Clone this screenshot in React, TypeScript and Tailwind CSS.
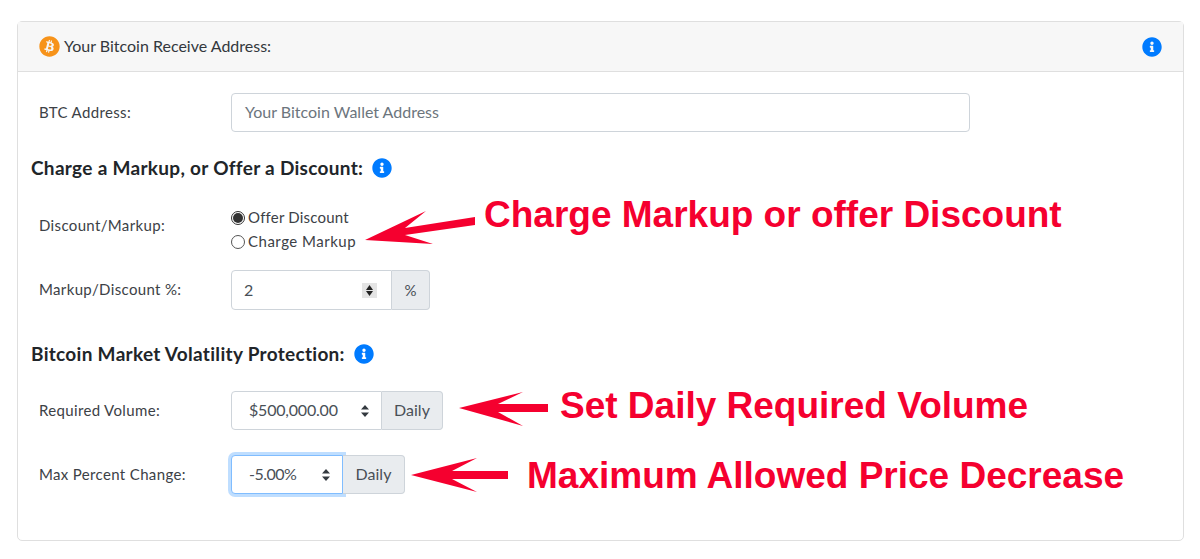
import React from "react";
import { FaBitcoin, FaInfoCircle } from "react-icons/fa";

function Updown() {
  return (
    <svg width="8" height="12" viewBox="0 0 8 12" className="shrink-0">
      <path d="M4 0 L8 4.6 H0 Z M0 7.4 H8 L4 12 Z" fill="#343a40" />
    </svg>
  );
}

function Spinner() {
  return (
    <div className="flex h-[15px] w-[15px] flex-col items-center justify-center gap-[1px] bg-[#e4e4e4]">
      <svg width="9" height="5" viewBox="0 0 9 5"><path d="M4.5 0 L8 5 H1 Z" fill="#222" /></svg>
      <svg width="9" height="5" viewBox="0 0 9 5"><path d="M1 0 H8 L4.5 5 Z" fill="#222" /></svg>
    </div>
  );
}

function Arrow({ x, y, w, h, points }: { x: number; y: number; w: number; h: number; points: string }) {
  return (
    <svg width={w} height={h} viewBox={`0 0 ${w} ${h}`} className="absolute" style={{ left: x, top: y }}>
      <polygon points={points} fill="#f5002f" />
    </svg>
  );
}

function Note({ x, y, children }: { x: number; y: number; children: React.ReactNode }) {
  return (
    <div
      className="absolute whitespace-nowrap font-['Liberation_Sans',sans-serif] text-[37px] leading-[44px] font-bold text-[#f5002f]"
      style={{ left: x, top: y }}
    >
      {children}
    </div>
  );
}

function Label({ children, top }: { children: React.ReactNode; top?: boolean }) {
  return (
    <div className={top ? "w-[200px] shrink-0 pt-[8px] pl-[8px] text-[15px] tracking-[0.35px] text-[#3c4146]" : "w-[200px] shrink-0 pb-[1px] pl-[8px] text-[15px] tracking-[0.35px] text-[#3c4146]"}>
      {children}
    </div>
  );
}

export default function App() {
  return (
    <div className="relative h-[559px] w-[1200px] overflow-hidden bg-white pt-[21px] pl-[17px] font-['Lato',sans-serif]">
      <div className="h-[520px] w-[1167px] rounded-[5px] border border-[#dfdfdf] bg-white">
        <div className="flex h-[50px] items-center justify-between border-b border-[#dfdfdf] bg-[#f7f7f7] pr-[21px] pl-[21px]">
          <div className="flex items-center gap-[4px] text-[16px] text-[#33383d]">
            <FaBitcoin className="h-[21px] w-[21px] text-[#f7931a]" />
            <span className="pb-[2px]">Your Bitcoin Receive Address:</span>
          </div>
          <FaInfoCircle className="h-[20px] w-[20px] text-[#007bff]" />
        </div>

        <div className="px-[13px] pt-[21px]">
          <div className="flex items-center">
            <Label>BTC Address:</Label>
            <div className="flex h-[39px] w-[739px] items-center rounded-[4px] border border-[#ced4da] bg-white pb-[2px] pl-[13px] text-[16px] text-[#6c757d]">
              Your Bitcoin Wallet Address
            </div>
          </div>

          <div className="mt-[24px] flex items-center gap-[9px] text-[19px] leading-[24px] font-bold tracking-[0.3px] text-[#212529]">
            <span>Charge a Markup, or Offer a Discount:</span>
            <FaInfoCircle className="h-[20px] w-[20px] text-[#007bff]" />
          </div>

          <div className="mt-[26px] flex items-start">
            <Label top>Discount/Markup:</Label>
            <div className="flex flex-col gap-[1px] text-[15px] leading-[23px] tracking-[0.2px] text-[#3c4146]">
              <div className="flex items-center gap-[3px]">
                <span className="flex h-[14px] w-[14px] items-center justify-center rounded-full border border-[#333] bg-white">
                  <span className="h-[10px] w-[10px] rounded-full bg-[#333]" />
                </span>
                Offer Discount
              </div>
              <div className="flex items-center gap-[3px]">
                <span className="h-[14px] w-[14px] rounded-full border border-[#555] bg-white" />
                <span className="tracking-[0.5px]">Charge Markup</span>
              </div>
            </div>
          </div>

          <div className="mt-[17px] flex items-center">
            <Label>Markup/Discount %:</Label>
            <div className="flex h-[40px] text-[16px] text-[#495057]">
              <div className="flex w-[161px] items-center justify-between rounded-l-[4px] border border-[#ced4da] bg-white pr-[14px] pl-[12px]">
                2
                <Spinner />
              </div>
              <div className="flex w-[38px] items-center justify-center rounded-r-[4px] border border-l-0 border-[#ced4da] bg-[#e9ecef] text-[15px]">%</div>
            </div>
          </div>

          <div className="mt-[32px] flex items-center gap-[9px] text-[19px] leading-[24px] font-bold tracking-[0.3px] text-[#212529]">
            <span>Bitcoin Market Volatility Protection:</span>
            <FaInfoCircle className="h-[20px] w-[20px] text-[#007bff]" />
          </div>

          <div className="mt-[25px] flex items-center">
            <Label>Required Volume:</Label>
            <div className="flex h-[39px] text-[16px] text-[#495057]">
              <div className="flex w-[151px] items-center justify-between rounded-l-[4px] border border-[#ced4da] bg-white pr-[12px] pl-[17px] tracking-[-0.2px]">
                <span className="pb-[2px]">$500,000.00</span>
                <Updown />
              </div>
              <div className="flex w-[61px] items-center justify-center rounded-r-[4px] border border-l-0 border-[#ced4da] bg-[#e9ecef] pb-[2px]">Daily</div>
            </div>
          </div>

          <div className="mt-[25px] flex items-center">
            <Label>Max Percent Change:</Label>
            <div className="flex h-[39px] text-[16px] text-[#495057]">
              <div className="flex w-[112px] items-center justify-between rounded-l-[4px] border border-[#80bdff] bg-white pr-[12px] pl-[17px] tracking-[-0.5px] shadow-[0_0_0_3px_rgba(0,123,255,0.25)]">
                <span className="pb-[2px]">-5.00%</span>
                <Updown />
              </div>
              <div className="flex w-[62px] items-center justify-center rounded-r-[4px] border border-l-0 border-[#ced4da] bg-[#e9ecef] pb-[2px]">Daily</div>
            </div>
          </div>
        </div>
      </div>

      <Arrow x={364} y={210} w={112} h={36} points="1,30 62,1 41,18 111,7 111,15 41,25 69,34" />
      <Note x={484} y={193}>Charge Markup or offer Discount</Note>
      <Arrow x={458} y={391} w={92} h={36} points="1,17 65,1 40,13 90,13 90,21 40,21 65,35" />
      <Note x={560} y={384}>Set Daily Required Volume</Note>
      <Arrow x={410} y={458} w={98} h={35} points="1,17 67,0 42,13 98,13 98,21 42,21 67,34" />
      <Note x={527} y={454}>Maximum Allowed Price Decrease</Note>
    </div>
  );
}
